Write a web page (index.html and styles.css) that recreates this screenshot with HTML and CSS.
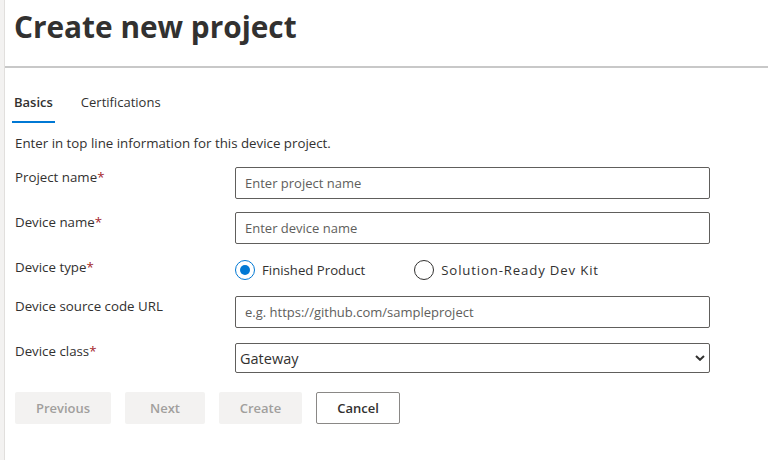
FILE: index.html
```html
<!DOCTYPE html>
<html>
<head>
<meta charset="utf-8">
<link rel="stylesheet" href="styles.css">
</head>
<body>
<div class="page">
  <header class="header">
    <h1 class="title">Create new project</h1>
  </header>
  <div class="content">
    <nav class="tabs">
      <span class="tab active">Basics</span>
      <span class="tab">Certifications</span>
    </nav>
    <p class="desc">Enter in top line information for this device project.</p>
    <form class="form">
      <label class="label">Project name<span class="req">*</span></label>
      <div class="field"><input class="input" type="text" placeholder="Enter project name"></div>

      <label class="label">Device name<span class="req">*</span></label>
      <div class="field"><input class="input" type="text" placeholder="Enter device name"></div>

      <label class="label">Device type<span class="req">*</span></label>
      <div class="field radios">
        <span class="radio"><span class="dot checked"></span>Finished Product</span>
        <span class="radio wide"><span class="dot"></span>Solution-Ready Dev Kit</span>
      </div>

      <label class="label">Device source code URL</label>
      <div class="field"><input class="input" type="text" placeholder="e.g. https://github.com/sampleproject"></div>

      <label class="label">Device class<span class="req">*</span></label>
      <div class="field">
        <div class="select">
          <span>Gateway</span>
          <svg class="chev" width="10" height="6" viewBox="0 0 10 6"><path d="M1 1 L5 4.8 L9 1" fill="none" stroke="#323130" stroke-width="2"/></svg>
        </div>
      </div>
    </form>
    <div class="buttons">
      <button class="btn disabled w-prev" type="button">Previous</button>
      <button class="btn disabled w-next" type="button">Next</button>
      <button class="btn disabled w-create" type="button">Create</button>
      <button class="btn cancel w-cancel" type="button">Cancel</button>
    </div>
  </div>
</div>
</body>
</html>
```
FILE: styles.css
```css
* { box-sizing: border-box; }
html, body { margin: 0; padding: 0; background: #fff; }
body {
  font-family: "Open Sans", "Noto Sans", sans-serif;
  color: #323130;
  font-size: 13px;
}
.page {
  height: 460px;
  border-left: 4px solid #f3f2f1;
  position: relative;
}
.page::before {
  content: "";
  position: absolute;
  left: 0; top: 0; bottom: 0;
  width: 1px;
  background: #e1dfdd;
}
.header {
  height: 68px;
  border-bottom: 2px solid #c8c8c8;
  margin-left: 1px;
  padding-left: 9px;
}
.title {
  margin: 0;
  padding-top: 7px;
  font-size: 29.8px;
  font-weight: 700;
  letter-spacing: 0;
  color: #323130;
  line-height: 40px;
}
.content { padding-left: 9px; }
.tabs {
  display: flex;
  margin-top: 22px;
  height: 34px;
}
.tab {
  font-size: 13px;
  line-height: 25px;
  height: 33px;
  padding: 0 1px;
  margin-right: 25px;
  color: #323130;
}
.tab.active {
  font-weight: 600;
  border-bottom: 2px solid #0078d4;
  margin-left: -1px;
  padding: 0 2px 0 2px;
}
.desc {
  margin: 9px 0 0 2px;
  font-size: 13.3px;
  line-height: 20px;
}
.form {
  display: grid;
  grid-template-columns: 220px 475px;
  grid-template-rows: 32px 32px 26px 32px 30px;
  row-gap: 13px;
  margin-top: 14px;
  margin-left: 2px;
}
.label {
  font-size: 13.3px;
  line-height: 20px;
  margin-top: 0;
}
.req { color: #a4262c; }
.input {
  width: 475px;
  height: 32px;
  border: 1px solid #605e5c;
  border-radius: 2px;
  padding: 0 9px;
  font-family: inherit;
  font-size: 13px;
  color: #323130;
  outline: none;
}
.input::placeholder { color: #605e5c; }
.radios {
  display: flex;
  align-items: center;
  height: 26px;
}
.radio {
  display: inline-flex;
  align-items: center;
  font-size: 13.2px;
  margin-right: 49px;
}
.radio.wide { letter-spacing: 0.85px; }
.dot {
  width: 20px;
  height: 20px;
  border-radius: 50%;
  border: 1px solid #323130;
  margin-right: 7px;
  position: relative;
}
.dot.checked { border-color: #0078d4; }
.dot.checked::after {
  content: "";
  position: absolute;
  left: 4px; top: 4px;
  width: 10px; height: 10px;
  border-radius: 50%;
  background: #0078d4;
}
.form > .field:nth-child(10) { padding-top: 2px; }
.select {
  width: 475px;
  height: 30px;
  border: 1px solid #605e5c;
  border-radius: 2px;
  display: flex;
  align-items: center;
  justify-content: space-between;
  padding: 0 4px 0 4px;
  font-size: 14.5px;
}
.buttons {
  display: flex;
  gap: 14px;
  margin-top: 21px;
  margin-left: 2px;
}
.btn {
  height: 32px;
  border-radius: 2px;
  font-family: inherit;
  font-size: 13px;
  font-weight: 600;
  border: 1px solid transparent;
  padding: 0;
}
.btn.disabled { background: #f3f2f1; color: #a19f9d; }
.btn.cancel { background: #fff; border-color: #8a8886; color: #323130; }
.w-prev { width: 96px; }
.w-next { width: 80px; }
.w-create { width: 83px; }
.w-cancel { width: 84px; }
```
